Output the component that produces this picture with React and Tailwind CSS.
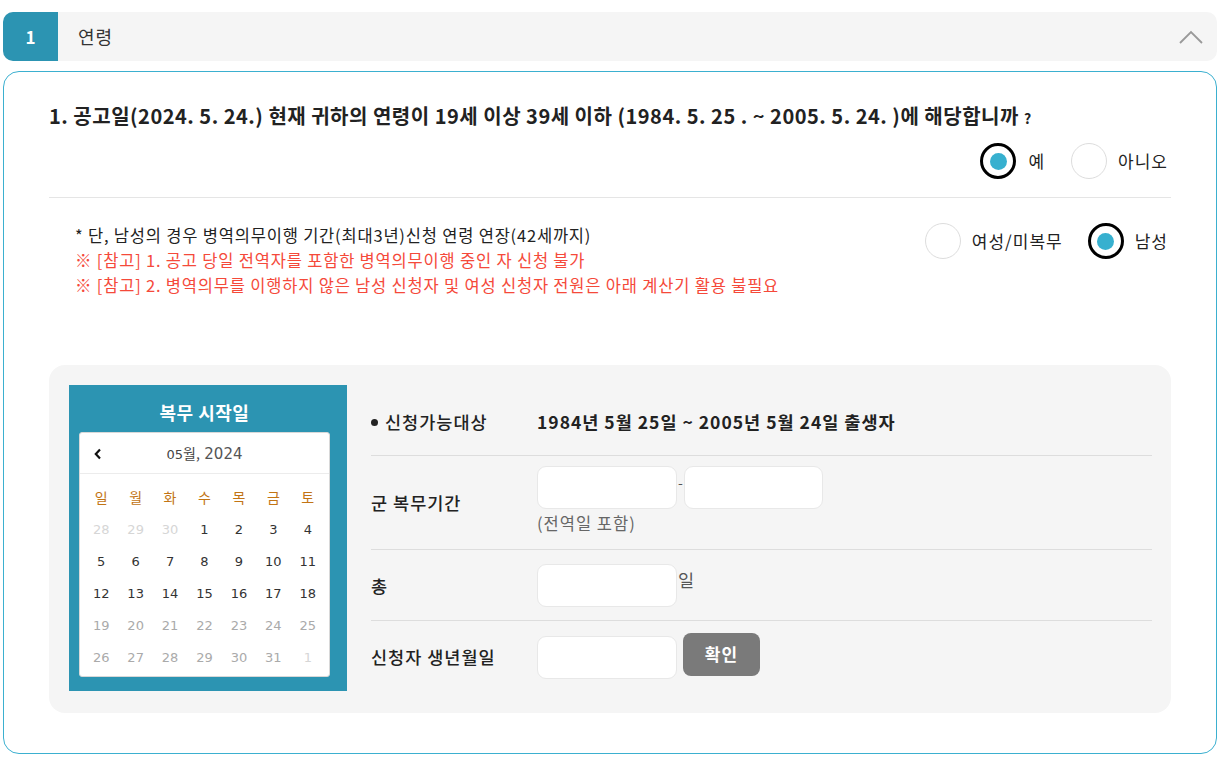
import React from "react";

const font = { fontFamily: '"Noto Sans CJK KR", "Noto Sans", sans-serif' };

function Radio({ checked }) {
  return checked ? (
    <span className="flex h-[36px] w-[36px] shrink-0 items-center justify-center rounded-full border-[3px] border-black bg-white">
      <span className="h-[17px] w-[17px] rounded-full bg-[#37b0cf]" />
    </span>
  ) : (
    <span className="h-[36px] w-[36px] shrink-0 rounded-full border border-[#dddddd] bg-white" />
  );
}

const weeks = [
  [["28", "o"], ["29", "o"], ["30", "o"], ["1", "d"], ["2", "d"], ["3", "d"], ["4", "d"]],
  [["5", "d"], ["6", "d"], ["7", "d"], ["8", "d"], ["9", "d"], ["10", "d"], ["11", "d"]],
  [["12", "d"], ["13", "d"], ["14", "d"], ["15", "d"], ["16", "d"], ["17", "d"], ["18", "d"]],
  [["19", "f"], ["20", "f"], ["21", "f"], ["22", "f"], ["23", "f"], ["24", "f"], ["25", "f"]],
  [["26", "f"], ["27", "f"], ["28", "f"], ["29", "f"], ["30", "f"], ["31", "f"], ["1", "o"]],
];

function Calendar() {
  return (
    <div className="flex h-[306px] w-[278px] shrink-0 flex-col bg-[#2c94b2] pl-[10px]">
      <div className="flex h-[47px] w-[251px] items-center justify-center pt-[7px] text-[18px] font-bold tracking-[0.5px] text-white">
        복무 시작일
      </div>
      <div className="h-[245px] w-[251px] rounded-[3px] border border-[#d8d8d8] bg-white">
        <div className="relative flex h-[41px] items-center justify-center border-b border-[#ececec] pt-[3px]">
          <svg className="absolute left-[13px] top-[15px]" width="10" height="12" viewBox="0 0 10 12">
            <path d="M7 1.5 L2.8 6 L7 10.5" fill="none" stroke="#111" strokeWidth="2.2" />
          </svg>
          <span className="text-[14px] text-[#444]" style={{ fontFamily: '"DejaVu Sans", "Noto Sans CJK KR", sans-serif' }}>
            <span className="text-[13px]">05</span><span style={font} className="text-[14px]">월,</span> <span className="text-[15px] text-[#555]">2024</span>
          </span>
        </div>
        <div className="grid grid-cols-7 px-[4px] pt-[9px] text-center" style={{ fontFamily: 'Tahoma, "DejaVu Sans", sans-serif' }}>
          {["일", "월", "화", "수", "목", "금", "토"].map((d) => (
            <div key={d} className="h-[32px] text-[14px] leading-[28px] text-[#c27414]" style={font}>{d}</div>
          ))}
          {weeks.flat().map(([n, t], i) => (
            <div
              key={i}
              className={
                "h-[32px] text-[13px] leading-[30px] " +
                (t === "d" ? "text-[#333]" : t === "f" ? "text-[#aaaaaa]" : "text-[#d6d6d6]")
              }
            >
              {n}
            </div>
          ))}
        </div>
      </div>
    </div>
  );
}

function Input({ w = "w-[140px]" }) {
  return <div className={`h-[43px] ${w} shrink-0 rounded-[9px] border border-[#e8e8e8] bg-white`} />;
}

export default function App() {
  return (
    <div className="min-h-[764px] w-[1220px] bg-white px-[3px] pt-[12px]" style={font}>
      {/* header */}
      <div className="flex h-[49px] items-center overflow-hidden rounded-[10px] bg-[#f5f5f5]">
        <div className="flex h-full w-[55px] items-center justify-center bg-[#2c94b2] text-[17px] font-bold text-white">1</div>
        <div className="ml-[20px] flex-1 text-[18px] tracking-[1px] text-[#333]">연령</div>
        <svg className="mr-[14px]" width="24" height="14" viewBox="0 0 24 14">
          <path d="M1 13 L12 2 L23 13" fill="none" stroke="#999" strokeWidth="1.8" />
        </svg>
      </div>

      {/* card */}
      <div className="mt-[10px] h-[683px] rounded-[16px] border border-[#3bb0d0] px-[45px]">
        <div className="whitespace-nowrap pt-[29px] text-[20px] font-bold tracking-[0.5px] text-[#222]">
          1. 공고일(2024. 5. 24.) 현재 귀하의 연령이 19세 이상 39세 이하 (1984. 5. 25 . ~ 2005. 5. 24. )에 해당합니까 <span className="text-[14px]">?</span>
        </div>
        <div className="mt-[12px] flex items-center justify-end pr-[3px]">
          <Radio checked />
          <span className="ml-[12px] mr-[26px] text-[17px] tracking-[1px] text-[#222]">예</span>
          <Radio />
          <span className="ml-[11px] text-[17px] tracking-[1px] text-[#222]">아니오</span>
        </div>
        <div className="mt-[18px] border-t border-[#e5e5e5]" />

        <div className="flex justify-between pt-[25px]">
          <div className="whitespace-nowrap pl-[26px] text-[16.5px] leading-[25px] tracking-[0.8px]">
            <div className="text-[#222]">* 단, 남성의 경우 병역의무이행 기간(최대3년)신청 연령 연장(42세까지)</div>
            <div className="text-[#f5493a]">※ [참고] 1. 공고 당일 전역자를 포함한 병역의무이행 중인 자 신청 불가</div>
            <div className="text-[#f5493a]">※ [참고] 2. 병역의무를 이행하지 않은 남성 신청자 및 여성 신청자 전원은 아래 계산기 활용 불필요</div>
          </div>
          <div className="flex items-start pr-[3px]">
            <Radio />
            <span className="ml-[11px] mr-[25px] text-[17px] leading-[36px] tracking-[1px] text-[#222]">여성/미복무</span>
            <Radio checked />
            <span className="ml-[11px] text-[17px] leading-[36px] tracking-[1px] text-[#222]">남성</span>
          </div>
        </div>

        {/* calculator */}
        <div className="mt-[67px] flex rounded-[16px] bg-[#f5f5f5] p-[20px] pr-[19px]">
          <Calendar />
          <div className="ml-[24px] flex-1 text-[17.5px] tracking-[1px] text-[#222]">
            <div className="flex h-[71px] items-center border-b border-[#dddddd] pt-[4px]">
              <span className="w-[166px] font-medium">
                <span className="mr-[7px] inline-block h-[7px] w-[7px] -translate-y-[3px] rounded-full bg-[#222]" />신청가능대상
              </span>
              <span className="font-bold">1984년 5월 25일 ~ 2005년 5월 24일 출생자</span>
            </div>
            <div className="flex h-[94px] border-b border-[#dddddd] pt-[10px]">
              <span className="w-[166px] pt-[24px] font-medium">군 복무기간</span>
              <div>
                <div className="flex items-start">
                  <Input />
                  <span className="mx-[1px] mt-[6px] text-[14px] tracking-normal text-[#555]">-</span>
                  <Input w="w-[139px]" />
                </div>
                <div className="mt-[2px] text-[16.5px] text-[#666]">(전역일 포함)</div>
              </div>
            </div>
            <div className="flex h-[71px] items-center border-b border-[#dddddd]">
              <span className="w-[166px] pt-[2px] font-medium">총</span>
              <Input />
              <span className="-mt-[10px] ml-[1px] text-[#555]">일</span>
            </div>
            <div className="flex h-[72px] items-center">
              <span className="w-[166px] font-medium">신청자 생년월일</span>
              <Input />
              <button className="-mt-[6px] ml-[6px] h-[43px] w-[77px] rounded-[8px] bg-[#7a7a7a] text-[17px] font-bold tracking-[1px] text-white">확인</button>
            </div>
          </div>
        </div>
      </div>
    </div>
  );
}
